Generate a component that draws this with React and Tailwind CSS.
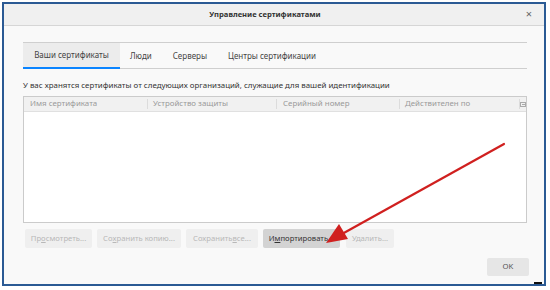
export default function App() {
  const font = { fontFamily: '"Noto Sans", "Open Sans", sans-serif' };
  const btn = "h-[19px] flex items-center justify-center whitespace-nowrap bg-[#efefef] text-[#b8b8b8] text-[7.7px] rounded-[2px]";
  return (
    <div className="relative w-[550px] h-[290px] bg-white pt-[2px] pl-[2px]" style={font}>
      <div className="w-[544px] h-[284px] border-2 border-[#2b5a94] flex flex-col bg-[#f9f9f9]">
        <div className="h-[22px] shrink-0 bg-[#f0f0f0] border-b border-[#d6d6d6] flex items-center relative">
          <div className="w-full text-center text-[7.6px] font-bold text-[#333] pr-[18px]">Управление сертификатами</div>
          <div className="absolute right-[12px] top-[4px] text-[11px] text-[#666] leading-none">×</div>
        </div>
        <div className="flex flex-col pl-[19px] pr-[17px] pt-[16px]">
          <div className="flex h-[27px] border-y border-[#cfcfcf] text-[8px] text-[#444] whitespace-nowrap">
            <div className="w-[97px] flex items-center justify-center bg-[#ececec] border-b-2 border-[#0a84ff] -mb-[1px]">Ваши сертификаты</div>
            <div className="pl-[10px] pr-[10px] flex items-center">Люди</div>
            <div className="px-[11px] flex items-center">Серверы</div>
            <div className="px-[10px] flex items-center">Центры сертификации</div>
          </div>
          <div className="mt-[10px] h-[12px] leading-[12px] text-[7.9px] text-[#333] whitespace-nowrap">У вас хранятся сертификаты от следующих организаций, служащие для вашей идентификации</div>
          <div className="mt-[5px] h-[127px] border border-[#cbcbcb] bg-white flex flex-col">
            <div className="h-[15px] bg-[#f1f1f1] border-b border-[#e0e0e0] flex text-[7.9px] text-[#9a9a9a] whitespace-nowrap">
              <div className="w-[123px] flex items-center pl-[6px]">Имя сертификата</div>
              <div className="w-[129px] flex items-center pl-[5px] border-l border-[#dcdcdc] my-[2px]">Устройство защиты</div>
              <div className="w-[123px] flex items-center pl-[6px] border-l border-[#dcdcdc] my-[2px]">Серийный номер</div>
              <div className="w-[120px] flex items-center pl-[5px] border-l border-[#dcdcdc] my-[2px]">Действителен по</div>
              <div className="flex-1 flex items-center justify-center border-l border-[#dcdcdc] my-[2px]">
                <svg width="6" height="5" viewBox="0 0 6 5"><rect x="0.5" y="0.5" width="5" height="4" fill="none" stroke="#aaa" strokeWidth="1"/><rect x="2" y="2" width="3" height="1" fill="#aaa"/></svg>
              </div>
            </div>
          </div>
          <div className="mt-[6px] flex gap-[5px] pl-[2px]">
            <div className={btn + " w-[67px]"}>Пр<span className="underline">о</span>смотреть...</div>
            <div className={btn + " w-[84px]"}>Со<span className="underline">х</span>ранить копию...</div>
            <div className={btn + " w-[72px]"}>Сохранить <span className="underline">в</span>се...</div>
            <div className="h-[19px] w-[77px] flex items-center justify-center whitespace-nowrap bg-[#d3d3d3] text-[#333] text-[7.7px] rounded-[2px]">И<span className="underline">м</span>портировать...</div>
            <div className={btn + " w-[48px] ml-[1px]"}>Удалить...</div>
          </div>
          <div className="mt-[10px] flex justify-end -mr-[2px]">
            <div className="h-[18px] w-[42px] flex items-center justify-center bg-[#e6e6e6] text-[#555] text-[7.7px] rounded-[2px]">OK</div>
          </div>
        </div>
      </div>
      <div className="absolute left-[534px] top-[282px] w-[8px] h-[2px] bg-[#111]"></div>
      <svg className="absolute left-0 top-0" width="550" height="290" viewBox="0 0 550 290">
        <line x1="504" y1="144" x2="342" y2="234" stroke="#d0201f" strokeWidth="2.2" strokeLinecap="round" />
        <polygon points="326,243 339,224 348,239" fill="#d0201f" />
      </svg>
    </div>
  );
}
